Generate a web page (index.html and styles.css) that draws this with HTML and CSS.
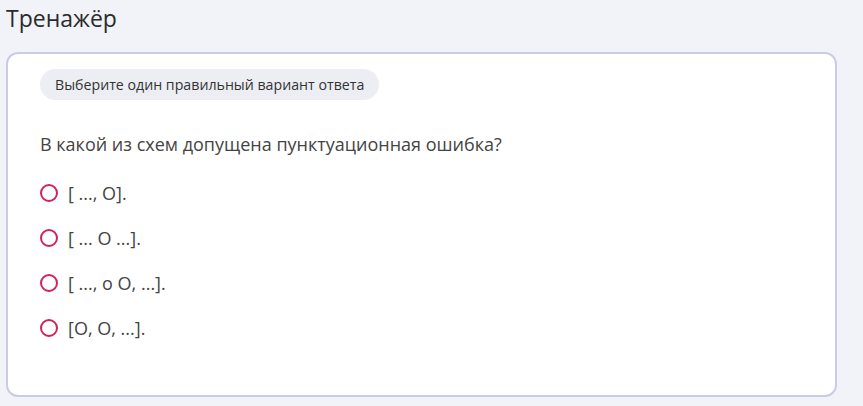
FILE: index.html
```html
<!DOCTYPE html>
<html lang="ru">
<head>
<meta charset="utf-8">
<link rel="stylesheet" href="styles.css">
</head>
<body>
<h2 class="title">Тренажёр</h2>
<div class="card">
  <div class="pill">Выберите один правильный вариант ответа</div>
  <p class="question">В какой из схем допущена пунктуационная ошибка?</p>
  <ul class="options">
    <li class="option"><span class="radio"></span><span>[ ..., O].</span></li>
    <li class="option"><span class="radio"></span><span>[ ... O ...].</span></li>
    <li class="option"><span class="radio"></span><span>[ ..., о O, ...].</span></li>
    <li class="option"><span class="radio"></span><span>[O, O, ...].</span></li>
  </ul>
</div>
</body>
</html>
```
FILE: styles.css
```css
html, body {
  margin: 0;
  padding: 0;
  background: #f1f3f8;
  font-family: "Open Sans", "Noto Sans", sans-serif;
  color: #333;
}
body {
  padding: 4px 26px 0 6px;
}
.title {
  margin: 0;
  font-size: 23px;
  font-weight: 500;
  line-height: 28px;
  color: #2b2b2b;
}
.card {
  margin-top: 20px;
  background: #fff;
  border: 2px solid #cacbe6;
  border-radius: 12px;
  padding: 15px 32px 30px;
  height: 296px;
}
.pill {
  display: inline-block;
  background: #eceef3;
  border-radius: 16px;
  padding: 0 15px;
  height: 31px;
  line-height: 31px;
  font-size: 14.2px;
  color: #333;
}
.question {
  margin: 32px 0 0;
  font-size: 18px;
  line-height: 24px;
  color: #444;
}
.options {
  list-style: none;
  margin: 25px 0 0;
  padding: 0;
  display: flex;
  flex-direction: column;
  gap: 21px;
}
.option {
  display: flex;
  align-items: center;
  gap: 10px;
  height: 24px;
  font-size: 18px;
  color: #444;
}
.radio {
  width: 14px;
  height: 14px;
  border: 2px solid #d1245a;
  border-radius: 50%;
  flex: none;
}
```
